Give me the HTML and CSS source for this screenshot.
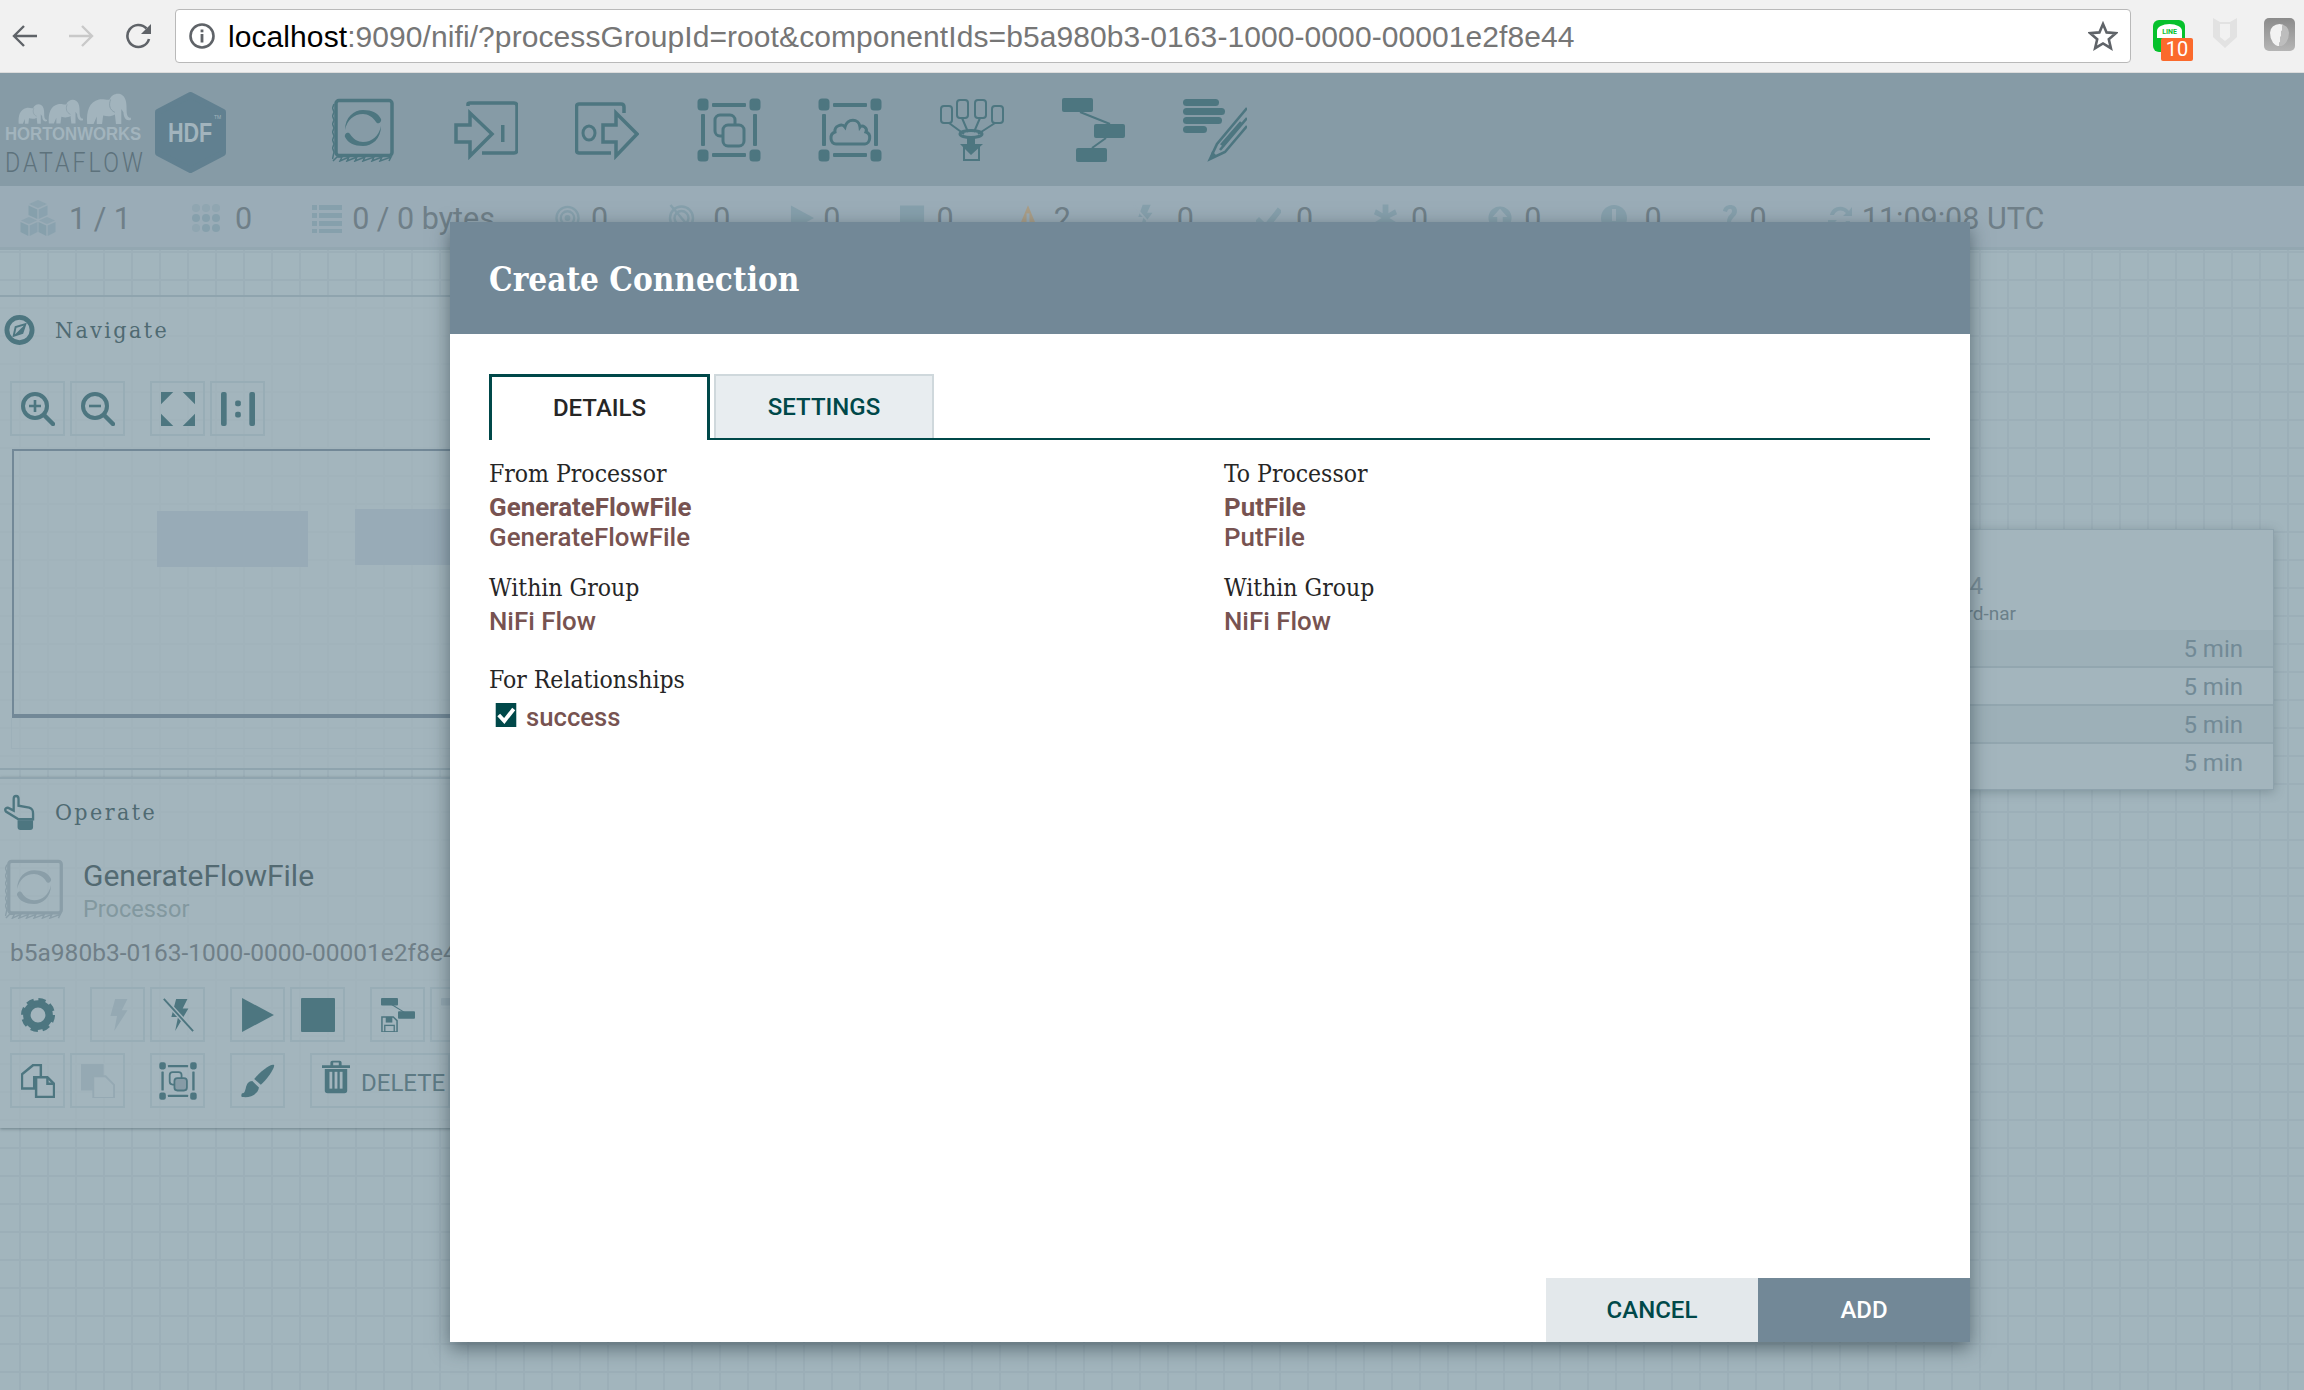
FILE: index.html
```html
<!DOCTYPE html>
<html lang="en">
<head>
    <meta charset="UTF-8">
    <meta name="viewport" content="width=device-width, initial-scale=1.0">
    <title>NiFi - Create Connection</title>
    <link rel="stylesheet" href="styles.css">
</head>
<body>
    <svg class="defs" width="0" height="0">
        <defs>
            <symbol id="group-frame" viewBox="0 0 64 64">
                <g fill="none" stroke="currentColor" stroke-width="3">
                    <rect x="2" y="2" width="8" height="9" rx="2"/>
                    <rect x="54" y="2" width="8" height="9" rx="2"/>
                    <rect x="2" y="53" width="8" height="9" rx="2"/>
                    <rect x="54" y="53" width="8" height="9" rx="2"/>
                </g>
                <g fill="currentColor">
                    <rect x="2" y="2" width="7" height="9" rx="2"/>
                    <rect x="55" y="2" width="7" height="9" rx="2"/>
                    <rect x="2" y="53" width="7" height="9" rx="2"/>
                    <rect x="55" y="53" width="7" height="9" rx="2"/>
                    <rect x="15" y="5" width="34" height="4" rx="1"/>
                    <rect x="15" y="55" width="34" height="4" rx="1"/>
                    <rect x="4" y="16" width="4" height="32" rx="1"/>
                    <rect x="56" y="16" width="4" height="32" rx="1"/>
                </g>
            </symbol>
            <symbol id="two-boxes" viewBox="0 0 64 64">
                <g fill="none" stroke="currentColor" stroke-width="3">
                    <rect x="18" y="17" width="20" height="21" rx="5"/>
                    <rect x="26" y="27" width="21" height="21" rx="5" fill="#869ba6"/>
                </g>
            </symbol>
            <symbol id="processor" viewBox="0 0 64 64">
                <rect x="4" y="2.500" width="56" height="55" rx="3" fill="none" stroke="currentColor" stroke-width="3.500"/>
                <path d="M2 6 L0.500 10 L2 14 L0.500 18 L2 22 L0.500 26 L2 30 L0.500 34 L2 38 L0.500 42 L2 46 L0.500 50 L2 54 L0.500 61 M1 63 L5 59 L10 59 L8 63 L17 59 L15 63 L25 59 L23 63 L33 59 L31 63 L42 59 L40 63 L50 59 L48 63 L59 59 L57 63" fill="none" stroke="currentColor" stroke-width="1.500"/>
                <path id="swirl" d="M13 32 C13 19 22 12 31 12 C40 12 46 15 49 21 C50 24 46 27 44 24 C41 19 36 16 31 16 C22 16 15 22 13 32 Z" fill="currentColor"/>
                <use href="#swirl" transform="rotate(180 31 30)"/>
            </symbol>
            <symbol id="elephant" viewBox="0 0 42 30">
                <path d="M1 30 C0 18 3 9 12 7 C16 6 20 8 22 7 C24 2 30 0 34 3 C38 6 38 12 38 18 C38 22 40 25 42 24 L42 26 C38 28 35 24 35 19 L33 16 L33 30 L28 30 L27 21 C24 23 20 23 16 22 L15 30 L10 30 L10 23 L7 30 Z" fill="currentColor"/>
                <path d="M23 7 C21 12 22 17 27 19" fill="none" stroke="#869ba6" stroke-width=".8"/>
            </symbol>
        </defs>
    </svg>

    <div class="browser-bar">
        <svg class="nav-ic" viewBox="0 0 26 24"><path d="M25 12 H3 M12 2 L2 12 L12 22" fill="none" stroke="#5f6368" stroke-width="2.4"/></svg>
        <svg class="nav-ic nav-fwd" viewBox="0 0 26 24"><path d="M1 12 H23 M14 2 L24 12 L14 22" fill="none" stroke="#c9c9c9" stroke-width="2.4"/></svg>
        <svg class="nav-ic nav-reload" viewBox="0 0 28 26"><path d="M24 16 A11 11 0 1 1 21.500 5.500" fill="none" stroke="#5f6368" stroke-width="2.600"/><path d="M26 1 V11 H16 Z" fill="#5f6368"/></svg>
        <div class="address">
            <svg class="info-ic" viewBox="0 0 28 28"><circle cx="14" cy="14" r="11.500" fill="none" stroke="#5f6368" stroke-width="2.600"/><rect x="12.600" y="12" width="2.800" height="8.500" fill="#5f6368"/><rect x="12.600" y="7.500" width="2.800" height="2.800" fill="#5f6368"/></svg>
            <span class="url"><span class="url-host">localhost</span>:9090/nifi/?processGroupId=root&amp;componentIds=b5a980b3-0163-1000-0000-00001e2f8e44</span>
            <svg class="star-ic" viewBox="0 0 30 30"><path d="M15 3 L18.600 11.400 L27.800 12.200 L20.800 18.200 L22.900 27.200 L15 22.400 L7.100 27.200 L9.200 18.200 L2.200 12.200 L11.400 11.400 Z" fill="none" stroke="#5f6368" stroke-width="2.600"/></svg>
        </div>
        <div class="ext ext-line">
            <span class="line-bubble">LINE</span>
            <span class="ext-badge">10</span>
        </div>
        <svg class="ext-shield" viewBox="0 0 26 32"><path d="M1 1 L8 5 H18 L25 1 V20 L13 31 L1 20 Z" fill="#e2e2e2"/><path d="M8 7 H18 V20 L13 24 L8 20 Z" fill="#f1f1f1"/></svg>
        <div class="ext-gray"><span class="ext-gray-dot"></span></div>
    </div>

    <header class="toolbar">
        <div class="logo">
            <svg class="herd" viewBox="0 0 114 33">
                <use href="#elephant" x="0" y="11" width="29" height="21"/>
                <use href="#elephant" x="30" y="6" width="35" height="26"/>
                <use href="#elephant" x="67" y="0" width="47" height="32"/>
            </svg>
            <div class="logo-brand">HORTONWORKS</div>
            <div class="logo-product">DATAFLOW</div>
        </div>
        <svg class="hex" viewBox="0 0 71 81">
            <polygon points="35.500,3 68,20 68,61 35.500,78 3,61 3,20" fill="#618090" stroke="#618090" stroke-width="6" stroke-linejoin="round"/>
            <text class="hex-text" transform="translate(13 50) scale(.77 1)">HDF</text>
            <text class="hex-tm" x="59" y="27">TM</text>
        </svg>
        <div class="tools">
            <svg class="tool" viewBox="0 0 64 64"><use href="#processor"/></svg>
            <svg class="tool" viewBox="0 0 64 64"><path d="M14 8 V6 Q14 5 16 5 H60 Q63 5 63 8 V52 Q63 55 60 55 H28" fill="none" stroke="currentColor" stroke-width="3.500"/><path d="M2 27 H16 V15 L38 36 L16 58 V44 H2 Z" fill="#869ba6" stroke="currentColor" stroke-width="3.500"/><rect x="47" y="27" width="3.500" height="17" fill="currentColor"/></svg>
            <svg class="tool" viewBox="0 0 64 64"><path d="M49 15 V9 Q49 6 46 6 H4 Q1.500 6 1.500 9 V52 Q1.500 55 4 55 H36" fill="none" stroke="currentColor" stroke-width="3.500"/><ellipse cx="14" cy="35" rx="6" ry="7" fill="none" stroke="currentColor" stroke-width="3"/><path d="M28 27 H41 V15 L62 36 L41 58 V44 H28 Z" fill="#869ba6" stroke="currentColor" stroke-width="3.500"/></svg>
            <svg class="tool" viewBox="0 0 64 64"><use href="#group-frame"/><use href="#two-boxes"/></svg>
            <svg class="tool" viewBox="0 0 64 64"><use href="#group-frame"/><path d="M18 46 C12 46 11 36 17 34 C16 28 24 25 27 29 C29 20 41 20 42 29 C44 26 50 30 48 34 C54 36 52 46 47 46 Z" fill="none" stroke="currentColor" stroke-width="3"/></svg>
            <svg class="tool" viewBox="0 0 64 64"><g fill="none" stroke="currentColor" stroke-width="2"><rect x="1" y="8" width="11" height="17" rx="3"/><rect x="17" y="2" width="11" height="18" rx="3"/><rect x="35" y="2" width="11" height="18" rx="3"/><rect x="52" y="8" width="11" height="17" rx="3"/><path d="M9 25 L24 36 M22 20 L28 34 M40 20 L34 34 M55 25 L38 36"/><path d="M24 48 V62 H39 V48"/></g><ellipse cx="31" cy="36" rx="11" ry="3.500" fill="none" stroke="currentColor" stroke-width="3"/><path d="M27 40 H35 V46 H43 L31 57 L20 46 H27 Z" fill="currentColor"/></svg>
            <svg class="tool" viewBox="0 0 64 64"><path d="M18 14 L48 26 M44 40 L30 50" stroke="currentColor" stroke-width="2"/><rect x="0" y="0" width="31" height="14" rx="2" fill="currentColor"/><rect x="32" y="26" width="31" height="14" rx="2" fill="currentColor"/><rect x="14" y="50" width="31" height="14" rx="2" fill="currentColor"/></svg>
            <svg class="tool" viewBox="0 0 64 64"><g fill="currentColor"><rect x="0" y="1" width="36" height="7" rx="3.500"/><rect x="0" y="10" width="42" height="7" rx="3.500"/><rect x="0" y="19" width="39" height="7" rx="3.500"/><rect x="0" y="28" width="24" height="7" rx="3.500"/></g><path d="M64 10 L34 46 L27 61 L42 54 L64 28 M64 20 L37 52 M58 24 L38 47" fill="none" stroke="currentColor" stroke-width="2.600"/><path d="M27 61 L29 53 L34 58 Z" fill="currentColor"/></svg>
        </div>
    </header>

    <div class="stats">
        <div class="stat"><svg class="stat-ic" viewBox="0 0 36 36"><g fill="currentColor"><path d="M18 0 L27 4 L18 8 L9 4 Z" opacity=".65"/><path d="M8.500 5.500 L17.300 9.500 V19 L8.500 15 Z"/><path d="M27.500 5.500 L18.700 9.500 V19 L27.500 15 Z" opacity=".8"/><path d="M9 17 L17 20.500 L9 24 L1 20.500 Z" opacity=".65"/><path d="M0.500 22 L8.300 25.500 V36 L0.500 32 Z"/><path d="M17.500 22 L9.700 25.500 V36 L17.500 32 Z" opacity=".8"/><path d="M27 17 L35 20.500 L27 24 L19 20.500 Z" opacity=".65"/><path d="M18.500 22 L26.300 25.500 V36 L18.500 32 Z"/><path d="M35.500 22 L27.700 25.500 V36 L35.500 32 Z" opacity=".8"/></g></svg><span>1 / 1</span></div>
        <div class="stat"><svg class="stat-ic" viewBox="0 0 30 30"><g fill="currentColor"><circle cx="5" cy="5" r="4" opacity=".5"/><circle cx="15" cy="5" r="4" opacity=".5"/><circle cx="25" cy="5" r="4" opacity=".5"/><circle cx="5" cy="15" r="4"/><circle cx="15" cy="15" r="4"/><circle cx="25" cy="15" r="4"/><circle cx="5" cy="25" r="4" opacity=".5"/><circle cx="15" cy="25" r="4"/><circle cx="25" cy="25" r="4"/></g></svg><span>0</span></div>
        <div class="stat"><svg class="stat-ic" viewBox="0 0 30 30"><g fill="currentColor"><rect x="0" y="2" width="5" height="5"/><rect x="7" y="2" width="23" height="5"/><rect x="0" y="10" width="5" height="5"/><rect x="7" y="10" width="23" height="5"/><rect x="0" y="18" width="5" height="5"/><rect x="7" y="18" width="23" height="5"/><rect x="0" y="26" width="5" height="4"/><rect x="7" y="26" width="23" height="4"/></g></svg><span>0 / 0 bytes</span></div>
        <div class="stat"><svg class="stat-ic" viewBox="0 0 26 30"><g fill="none" stroke="currentColor" stroke-width="2.400"><circle cx="13" cy="15" r="11.500"/><circle cx="13" cy="15" r="7"/></g><circle cx="13" cy="15" r="3" fill="currentColor"/></svg><span>0</span></div>
        <div class="stat"><svg class="stat-ic" viewBox="0 0 26 30"><g fill="none" stroke="currentColor" stroke-width="2.400"><circle cx="13" cy="15" r="11.500"/><circle cx="13" cy="15" r="7"/><path d="M2 2 L24 28"/></g></svg><span>0</span></div>
        <div class="stat"><svg class="stat-ic" viewBox="0 0 26 30"><path d="M1 2 L25 15 L1 28 Z" fill="currentColor"/></svg><span>0</span></div>
        <div class="stat"><svg class="stat-ic" viewBox="0 0 26 30"><rect x="0" y="2" width="25" height="26" fill="currentColor"/></svg><span>0</span></div>
        <div class="stat"><svg class="stat-ic" viewBox="0 0 24 30"><path d="M12 1 L24 30 H0 Z" fill="#aa9e87"/><rect x="10.400" y="10" width="3.200" height="10" fill="#9aacb7"/></svg><span>2</span></div>
        <div class="stat"><svg class="stat-ic" viewBox="0 0 26 30"><path d="M11 0 H20 L16 9 H22 L8 28 L12 14 H6 Z" fill="currentColor"/><path d="M1 1 L24 27" stroke="#9aacb7" stroke-width="2"/></svg><span>0</span></div>
        <div class="stat"><svg class="stat-ic" viewBox="0 0 26 30"><path d="M1 16 L10 25 L25 6" fill="none" stroke="currentColor" stroke-width="6"/></svg><span>0</span></div>
        <div class="stat"><svg class="stat-ic" viewBox="0 0 26 30"><path d="M10 1 H16 V10 L23 6 L25 11 L17 15 L25 20 L22 25 L16 20 V29 H10 V20 L4 25 L1 20 L9 15 L1 11 L3 6 L10 10 Z" fill="currentColor"/></svg><span>0</span></div>
        <div class="stat"><svg class="stat-ic" viewBox="0 0 26 30"><circle cx="13" cy="15" r="12.500" fill="currentColor"/><path d="M13 5 L21 14 H16 V23 H10 V14 H5 Z" fill="#9aacb7"/></svg><span>0</span></div>
        <div class="stat"><svg class="stat-ic" viewBox="0 0 26 30"><circle cx="13" cy="15" r="13" fill="currentColor"/><rect x="11" y="6" width="4" height="12" fill="#9aacb7"/><rect x="11" y="20" width="4" height="4" fill="#9aacb7"/></svg><span>0</span></div>
        <div class="stat"><svg class="stat-ic" viewBox="0 0 16 30"><path d="M1 8 C2 0 15 0 15 8 C15 14 9 14 9 20 H5 C5 11 10 12 10 8 C10 5 6 5 5 9 Z" fill="currentColor"/><rect x="5" y="23" width="4" height="5" fill="currentColor"/></svg><span>0</span></div>
        <div class="stat"><svg class="stat-ic" viewBox="0 0 26 30"><path d="M3 12 C5 3 16 1 22 8 L25 4 V13 H16 L19 10 C15 6 9 7 7 12 Z M23 18 C21 27 10 29 4 22 L1 26 V17 H10 L7 20 C11 24 17 23 19 18 Z" fill="currentColor"/></svg><span>11:09:08 UTC</span></div>
    </div>

    <main class="canvas">
        <aside class="palette">
            <section class="panel nav-panel">
                <div class="panel-head">
                    <svg class="panel-ic" viewBox="0 0 32 32"><circle cx="16" cy="16" r="13" fill="none" stroke="currentColor" stroke-width="5"/><path d="M22 10 L19 19 L10 22 L12 13 Z" fill="none" stroke="currentColor" stroke-width="2"/><path d="M22 10 L19 19 L10 22 Z" fill="currentColor"/></svg>
                    <span>Navigate</span>
                </div>
                <div class="btn-row">
                    <button class="tool-btn"><svg viewBox="0 0 34 34"><circle cx="14" cy="14" r="12" fill="none" stroke="currentColor" stroke-width="4"/><path d="M24 24 L32 32" stroke="currentColor" stroke-width="4.500" stroke-linecap="round"/><path d="M14 8 V20 M8 14 H20" stroke="currentColor" stroke-width="2.600"/></svg></button>
                    <button class="tool-btn"><svg viewBox="0 0 34 34"><circle cx="14" cy="14" r="12" fill="none" stroke="currentColor" stroke-width="4"/><path d="M24 24 L32 32" stroke="currentColor" stroke-width="4.500" stroke-linecap="round"/><path d="M8 14 H20" stroke="currentColor" stroke-width="2.600"/></svg></button>
                    <button class="tool-btn btn-gap"><svg viewBox="0 0 36 36"><g fill="currentColor"><path d="M0 0 H13 L0 13 Z"/><path d="M36 0 V13 L23 0 Z"/><path d="M0 36 V23 L13 36 Z"/><path d="M36 36 H23 L36 23 Z"/></g></svg></button>
                    <button class="tool-btn"><svg viewBox="0 0 36 36"><g fill="currentColor"><rect x="0" y="0" width="6" height="36" rx="2"/><rect x="30" y="0" width="6" height="36" rx="2"/><rect x="15" y="9" width="6" height="6" rx="2"/><rect x="15" y="21" width="6" height="6" rx="2"/></g></svg></button>
                </div>
                <div class="birdseye">
                    <div class="bird-block"></div>
                    <div class="bird-block bird-second"></div>
                </div>
                <div class="birdseye-foot"></div>
            </section>

            <section class="panel op-panel">
                <div class="panel-head">
                    <svg class="panel-ic panel-ic-hand" viewBox="0 0 32 36"><path d="M10 16 V4 C10 0 15 0 15 4 V11 L26 13 C29 14 30 15 30 19 V25 H15 L2 17 C0 14 3 12 6 14 Z" fill="none" stroke="currentColor" stroke-width="2.400"/><path d="M14 26 H30 V33 Q30 36 27 36 H17 Q14 36 14 33 Z" fill="currentColor"/></svg>
                    <span>Operate</span>
                </div>
                <div class="selection">
                    <svg class="sel-ic" viewBox="0 0 64 64"><use href="#processor"/></svg>
                    <div>
                        <div class="sel-name">GenerateFlowFile</div>
                        <div class="sel-type">Processor</div>
                    </div>
                </div>
                <div class="sel-id">b5a980b3-0163-1000-0000-00001e2f8e44</div>
                <div class="btn-row">
                    <button class="tool-btn"><svg viewBox="0 0 32 32"><circle cx="16" cy="16" r="10.500" fill="none" stroke="currentColor" stroke-width="7"/><circle cx="16" cy="16" r="13" fill="none" stroke="currentColor" stroke-width="6" stroke-dasharray="6.200 4"/></svg></button>
                    <button class="tool-btn btn-gap is-off"><svg viewBox="0 0 32 36"><path d="M13 1 H26 L20 13 H26 L12 35 L15 19 H8 Z" fill="currentColor"/></svg></button>
                    <button class="tool-btn"><svg viewBox="0 0 32 36"><path d="M14 1 H26 L21 11 H27 L13 35 L16 20 H9 Z" fill="currentColor"/><path d="M1 1 L32 35" stroke="#a3b5bd" stroke-width="5"/><path d="M1 1 L32 35" stroke="currentColor" stroke-width="2"/></svg></button>
                    <button class="tool-btn btn-gap"><svg viewBox="0 0 32 32"><path d="M1 0 L31 16 L1 32 Z" fill="currentColor"/></svg></button>
                    <button class="tool-btn"><svg viewBox="0 0 32 32"><rect x="0" y="0" width="32" height="32" rx="1" fill="currentColor"/></svg></button>
                    <button class="tool-btn btn-gap"><svg viewBox="0 0 36 36"><rect x="0" y="0" width="18" height="8" rx="1" fill="currentColor"/><rect x="18" y="14" width="18" height="8" rx="1" fill="currentColor"/><path d="M10 6 L26 16" stroke="currentColor" stroke-width="1.200"/><path d="M1 20 H13 L17 24 V36 H1 Z" fill="none" stroke="currentColor" stroke-width="1.600"/><rect x="5" y="20" width="7" height="6" fill="currentColor"/><rect x="4" y="29" width="10" height="7" fill="none" stroke="currentColor" stroke-width="1.400"/></svg></button>
                    <button class="tool-btn is-off"><svg viewBox="0 0 36 36"><rect x="0" y="0" width="18" height="8" rx="1" fill="currentColor"/></svg></button>
                </div>
                <div class="btn-row btn-row-second">
                    <button class="tool-btn"><svg viewBox="0 0 36 36"><g fill="none" stroke="currentColor" stroke-width="2.600"><path d="M13 1 H21 V14 H14 V26 H1 V11 Z"/><path d="M16 14 H28 L35 21 V35 H16 Z" fill="#a3b5bd"/><path d="M28 14 V21 H35"/></g></svg></button>
                    <button class="tool-btn is-off"><svg viewBox="0 0 36 36"><rect x="0" y="0" width="24" height="28" fill="currentColor"/><path d="M13 13 H26 L35 22 V36 H13 Z" fill="#a3b5bd" stroke="currentColor" stroke-width="2"/></svg></button>
                    <button class="tool-btn btn-gap"><svg class="op-group" viewBox="0 0 64 64"><use href="#group-frame"/><use href="#two-boxes"/></svg></button>
                    <button class="tool-btn btn-gap"><svg viewBox="0 0 36 36"><path d="M35 1 C36 4 28 16 21 22 L14 16 C20 8 32 -1 35 1 Z" fill="currentColor"/><path d="M12 18 L19 25 C18 32 10 36 2 35 C0 35 0 33 1 31 C4 31 4 29 5 26 C6 21 8 18 12 18 Z" fill="currentColor"/></svg></button>
                    <button class="tool-btn btn-gap btn-delete"><svg viewBox="0 0 30 36"><path d="M0 6 H30 V9 H0 Z M9 6 V3 Q9 1 11 1 H19 Q21 1 21 3 V6 H18 V3 H12 V6 Z" fill="currentColor"/><path d="M3 10 H27 V33 Q27 36 24 36 H6 Q3 36 3 33 Z" fill="currentColor"/><g fill="#a3b5bd"><rect x="8" y="13" width="3" height="18"/><rect x="13.500" y="13" width="3" height="18"/><rect x="19" y="13" width="3" height="18"/></g></svg><span>DELETE</span></button>
                </div>
            </section>
        </aside>

        <div class="tile">
            <div class="tile-head">
                <div class="tile-name">44</div>
                <div class="tile-bundle">standard-nar</div>
            </div>
            <div class="tile-row tile-row-a">5 min</div>
            <div class="tile-row">5 min</div>
            <div class="tile-row tile-row-a">5 min</div>
            <div class="tile-row tile-row-last">5 min</div>
        </div>
    </main>

    <div class="dialog">
        <div class="dialog-head">Create Connection</div>
        <div class="dialog-body">
            <div class="tabs">
                <div class="tab tab-active">DETAILS</div>
                <div class="tab">SETTINGS</div>
            </div>
            <div class="details">
                <div>
                    <div class="field field-first">
                        <div class="field-label">From Processor</div>
                        <div class="field-value field-strong">GenerateFlowFile</div>
                        <div class="field-value">GenerateFlowFile</div>
                    </div>
                    <div class="field field-second">
                        <div class="field-label">Within Group</div>
                        <div class="field-value">NiFi Flow</div>
                    </div>
                    <div class="field-label field-label-rel">For Relationships</div>
                    <div class="rel-row">
                        <svg class="rel-check" viewBox="0 0 24 28"><rect width="24" height="28" fill="#004849"/><path d="M3.500 14 L10 21 L21 7" fill="none" stroke="#fff" stroke-width="4.500"/></svg>
                        <span class="rel-name">success</span>
                    </div>
                </div>
                <div>
                    <div class="field field-first">
                        <div class="field-label">To Processor</div>
                        <div class="field-value field-strong">PutFile</div>
                        <div class="field-value">PutFile</div>
                    </div>
                    <div class="field field-second">
                        <div class="field-label">Within Group</div>
                        <div class="field-value">NiFi Flow</div>
                    </div>
                </div>
            </div>
        </div>
        <div class="dialog-foot">
            <div class="dlg-btn dlg-cancel">CANCEL</div>
            <div class="dlg-btn dlg-add">ADD</div>
        </div>
    </div>
</body>
</html>
```

FILE: styles.css
```css
* {
    box-sizing: border-box;
}
html, body {
    height: 100%;
}
body {
    margin: 0;
    overflow: hidden;
    display: flex;
    flex-direction: column;
    font-family: Roboto, sans-serif;
    background-color: #a2b5bd;
}
.defs {
    position: absolute;
}

/* browser chrome */
.browser-bar {
    height: 73px;
    flex: none;
    display: flex;
    align-items: center;
    padding: 0 9px 1px 12px;
    background: #f1f1f1;
    border-bottom: 1px solid #dcdcdc;
}
.nav-ic {
    width: 26px;
    height: 24px;
    flex: none;
}
.nav-fwd {
    margin-left: 30px;
}
.nav-reload {
    width: 28px;
    height: 26px;
    margin-left: 31px;
}
.address {
    width: 1956px;
    height: 54px;
    margin-left: 22px;
    display: flex;
    align-items: center;
    padding: 0 12px;
    background: #fff;
    border: 1px solid #b9b9b9;
    border-radius: 4px;
}
.info-ic {
    width: 28px;
    height: 28px;
    flex: none;
}
.url {
    margin-left: 12px;
    padding-top: 2px;
    flex: 1;
    font-family: "Liberation Sans", sans-serif;
    font-size: 30px;
    letter-spacing: .08px;
    color: #767676;
    white-space: nowrap;
}
.url-host {
    color: #000;
}
.star-ic {
    width: 30px;
    height: 30px;
    flex: none;
}
.ext {
    position: relative;
}
.ext-line {
    width: 32px;
    height: 32px;
    margin-left: 22px;
    background: #06c12c;
    border-radius: 6px;
}
.line-bubble {
    position: absolute;
    left: 4px;
    top: 4px;
    width: 25px;
    height: 14px;
    border-radius: 50% 50% 0 0;
    background: #fff;
    color: #06c12c;
    font-size: 7px;
    font-weight: 700;
    line-height: 16px;
    text-align: center;
}
.ext-badge {
    position: absolute;
    left: 8px;
    top: 18px;
    width: 32px;
    height: 23px;
    background: #fb6a2c;
    border-radius: 2px;
    color: #fff;
    font-size: 20px;
    line-height: 23px;
    text-align: center;
}
.ext-shield {
    width: 26px;
    height: 32px;
    margin-left: 27px;
    margin-top: -5px;
    flex: none;
}
.ext-gray {
    width: 31px;
    height: 33px;
    margin-left: 26px;
    margin-top: -2px;
    padding: 6px;
    flex: none;
    border-radius: 5px;
    background: linear-gradient(#8b8b8b, #b5b5b5);
}
.ext-gray-dot {
    display: block;
    width: 19px;
    height: 22px;
    border-radius: 50% 50% 50% 50% / 40% 40% 60% 60%;
    background: linear-gradient(100deg, #f2f2f2 55%, #bdbdbd 56%);
}

/* nifi header */
.toolbar {
    height: 113px;
    flex: none;
    display: flex;
    background: #869ba6;
}
.logo {
    width: 155px;
    padding: 19px 0 0 5px;
    overflow: hidden;
}
.herd {
    display: block;
    width: 114px;
    height: 33px;
    margin-left: 13px;
    color: #a2b4bd;
}
.logo-brand {
    width: 135px;
    font-family: "Liberation Sans", sans-serif;
    font-size: 19px;
    font-weight: 700;
    line-height: 17px;
    color: #a2b4bd;
    white-space: nowrap;
    transform-origin: left;
    transform: scaleX(.88);
}
.logo-product {
    margin-top: 8px;
    font-size: 27px;
    font-weight: 300;
    line-height: 26px;
    letter-spacing: 3.5px;
    color: #5d727c;
    white-space: nowrap;
    transform-origin: left;
    transform: scaleX(.86);
}
.hex {
    width: 71px;
    height: 81px;
    margin-top: 19px;
    flex: none;
}
.hex-text {
    font-family: "Liberation Sans", sans-serif;
    font-size: 28px;
    font-weight: 700;
    fill: #a2b4bd;
}
.hex-tm {
    font-family: "Liberation Sans", sans-serif;
    font-size: 5px;
    fill: #a2b4bd;
}
.tools {
    display: flex;
    gap: 57.6px;
    margin-left: 106px;
    padding-top: 25px;
    color: #4d7680;
}
.tool {
    width: 64px;
    height: 64px;
    flex: none;
}

/* status strip */
.stats {
    height: 64px;
    flex: none;
    display: flex;
    align-items: center;
    gap: 60px;
    padding: 3px 0 0 20px;
    background: #9aacb7;
    border-bottom: 3px solid #93a7b1;
    color: #6f7f88;
    font-size: 30.5px;
    white-space: nowrap;
}
.stat {
    display: flex;
    align-items: center;
}
.stat-ic {
    height: 30px;
    flex: none;
    color: #86a0ac;
}
.stat:nth-child(1) .stat-ic { width: 36px; height: 36px; margin-right: 13px; }
.stat:nth-child(2) .stat-ic { width: 30px; margin-right: 14px; }
.stat:nth-child(3) .stat-ic { width: 30px; margin-right: 10px; }
.stat:nth-child(4) .stat-ic { width: 25px; margin-right: 11px; }
.stat:nth-child(5) .stat-ic { width: 27px; margin-right: 18px; }
.stat:nth-child(6) .stat-ic { width: 25px; margin-right: 8px; }
.stat:nth-child(7) .stat-ic { width: 25px; margin-right: 11px; }
.stat:nth-child(8) .stat-ic { width: 22px; margin: 0 15px 0 3px; }
.stat:nth-child(9) .stat-ic { width: 23px; margin: 0 21px 0 2px; }
.stat:nth-child(10) .stat-ic { width: 25px; margin: 0 15px 0 2px; }
.stat:nth-child(11) .stat-ic { width: 25px; margin-right: 13px; }
.stat:nth-child(12) .stat-ic { width: 24px; margin-right: 12px; }
.stat:nth-child(13) .stat-ic { width: 26px; margin-right: 17px; }
.stat:nth-child(14) .stat-ic { width: 16px; margin-right: 12px; }
.stat:nth-child(15) .stat-ic { width: 26px; margin-right: 9px; }

/* canvas */
.canvas {
    position: relative;
    flex: 1;
    min-height: 0;
    padding-top: 45px;
    background-color: #a2b5bd;
    background-image:
        linear-gradient(#9cafb8 2px, transparent 2px),
        linear-gradient(90deg, #9cafb8 2px, transparent 2px);
    background-size: 28px 28px;
    background-position: 19px 27px;
    background-attachment: fixed;
}
.palette {
    width: 520px;
}
.panel {
    background-color: #a3b5bd;
    background-image:
        linear-gradient(#a1b3bb 2px, transparent 2px),
        linear-gradient(90deg, #a1b3bb 2px, transparent 2px);
    background-size: 28px 28px;
    background-position: 19px 27px;
    background-attachment: fixed;
    border-top: 2px solid #8fa4ae;
    padding-left: 10px;
}
.nav-panel {
    height: 475px;
    padding-top: 17px;
    border-bottom: 2px solid #8fa4ae;
}
.op-panel {
    height: 351px;
    margin-top: 7px;
    padding-top: 17px;
    box-shadow: 0 1px 3px rgba(60, 80, 90, .5);
}
.panel-head {
    display: flex;
    align-items: center;
    gap: 20px;
    margin-left: -6px;
    height: 32px;
    font-family: "DejaVu Serif", serif;
    font-stretch: condensed;
    font-size: 23px;
    letter-spacing: 2.4px;
    color: #4f6a72;
}
.panel-ic {
    width: 31px;
    height: 32px;
    flex: none;
    color: #4d7680;
}
.panel-ic-hand {
    height: 37px;
}
.btn-row {
    display: flex;
    gap: 5px;
    margin-top: 35px;
}
.tool-btn {
    width: 55px;
    height: 55px;
    flex: none;
    display: flex;
    align-items: center;
    justify-content: center;
    padding: 0;
    background: transparent;
    border: 2px solid #98adb6;
    color: #4d7680;
    font-family: Roboto, sans-serif;
}
.tool-btn svg {
    width: 34px;
    height: 34px;
}
.tool-btn .op-group {
    width: 38px;
    height: 38px;
}
.btn-gap {
    margin-left: 20px;
}
.is-off {
    color: #95a9b3;
}
.btn-delete {
    width: 140px;
    justify-content: flex-start;
    gap: 11px;
    padding-left: 10px;
    font-size: 24px;
}
.btn-delete svg {
    width: 28px;
    height: 35px;
    margin-top: -8px;
}
.btn-delete span {
    padding-top: 4px;
    color: #5d7a84;
}
.birdseye {
    position: relative;
    height: 269px;
    margin: 13px 0 0 2px;
    border: solid #728897;
    border-width: 2px 0 4px 2px;
}
.bird-block {
    position: absolute;
    left: 143px;
    top: 60px;
    width: 151px;
    height: 56px;
    background: #98abb7;
}
.bird-second {
    left: 341px;
    top: 58px;
    width: 140px;
}
.birdseye-foot {
    height: 31px;
    margin-left: 1px;
    border: 1px solid #9db0b9;
    border-top: 0;
}
.selection {
    display: flex;
    gap: 18px;
    margin: 30px 0 0 -5px;
    height: 62px;
}
.sel-ic {
    width: 60px;
    height: 62px;
    flex: none;
    color: #8a9ea8;
}
.sel-name {
    font-size: 30px;
    line-height: 36px;
    color: #536a72;
    white-space: nowrap;
}
.sel-type {
    font-size: 23.5px;
    line-height: 30px;
    color: #82989f;
}
.sel-id {
    margin-top: 18px;
    font-size: 24.5px;
    line-height: 30px;
    color: #6f7f88;
    white-space: nowrap;
}
.op-panel .btn-row {
    margin-top: 19px;
}
.op-panel .btn-row-second {
    margin-top: 11px;
}

/* processor tile behind the dialog */
.tile {
    position: absolute;
    left: 1900px;
    top: 279px;
    width: 374px;
    height: 261px;
    background: #a3b5bd;
    border: 1px solid #8ea2ac;
    box-shadow: 0 2px 10px rgba(60, 80, 90, .35);
    font-size: 24px;
    color: #728a96;
}
.tile-head {
    height: 100px;
    padding-top: 41px;
    color: #7a8f99;
}
.tile-name {
    width: 82px;
    text-align: right;
    font-size: 24px;
    line-height: 30px;
}
.tile-bundle {
    width: 115px;
    margin-top: 1px;
    text-align: right;
    font-size: 19px;
    line-height: 24px;
    white-space: nowrap;
    color: #6b808a;
}
.tile-row {
    height: 38px;
    padding-right: 30px;
    text-align: right;
    line-height: 38px;
    border-bottom: 2px solid #92a6af;
}
.tile-row-a {
    background: #9db0b8;
}
.tile-row-last {
    border-bottom: 0;
}

/* dialog */
.dialog {
    position: absolute;
    left: 450px;
    top: 222px;
    width: 1520px;
    height: 1120px;
    display: flex;
    flex-direction: column;
    background: #fff;
    box-shadow: 0 6px 18px rgba(30, 45, 55, .55);
}
.dialog-head {
    height: 112px;
    flex: none;
    padding: 37px 0 0 39px;
    background: #728897;
    color: #fff;
    font-family: "DejaVu Serif", serif;
    font-stretch: condensed;
    font-weight: 700;
    font-size: 33px;
    line-height: 42px;
}
.dialog-body {
    flex: 1;
    padding: 40px 40px 0 39px;
}
.tabs {
    display: flex;
    gap: 4px;
    height: 66px;
    border-bottom: 2px solid #004849;
}
.tab {
    width: 220px;
    height: 64px;
    background: #e8edf0;
    border: 2px solid #cfd8dc;
    border-bottom: 0;
    color: #004849;
    font-size: 24px;
    font-weight: 500;
    line-height: 63px;
    text-align: center;
}
.tab-active {
    width: 221px;
    height: 66px;
    background: #fff;
    border: 3px solid #004849;
    border-bottom: 0;
    color: #262626;
}
.details {
    display: grid;
    grid-template-columns: 735px 1fr;
    padding-top: 19px;
}
.field-label {
    font-family: "DejaVu Serif", serif;
    font-stretch: condensed;
    font-size: 24.5px;
    line-height: 30px;
    margin-bottom: 3px;
    color: #262626;
}
.field-value {
    font-size: 25.9px;
    font-weight: 500;
    line-height: 30px;
    color: #775351;
}
.field-strong {
    font-weight: 700;
}
.field-first {
    margin-bottom: 21px;
}
.field-second {
    margin-bottom: 29px;
}
.field-label-rel {
    margin-bottom: 8px;
}
.rel-row {
    display: flex;
    align-items: center;
    gap: 8px;
    margin-left: 5px;
    height: 24px;
}
.rel-check {
    width: 24px;
    height: 24px;
    flex: none;
}
.rel-name {
    padding-top: 4px;
    font-size: 25.7px;
    font-weight: 500;
    color: #775351;
}
.dialog-foot {
    display: flex;
    justify-content: flex-end;
    flex: none;
}
.dlg-btn {
    width: 212px;
    height: 64px;
    font-size: 24px;
    font-weight: 500;
    line-height: 65px;
    text-align: center;
}
.dlg-cancel {
    background: #e3e8eb;
    color: #004849;
}
.dlg-add {
    background: #728897;
    color: #fff;
}
```
